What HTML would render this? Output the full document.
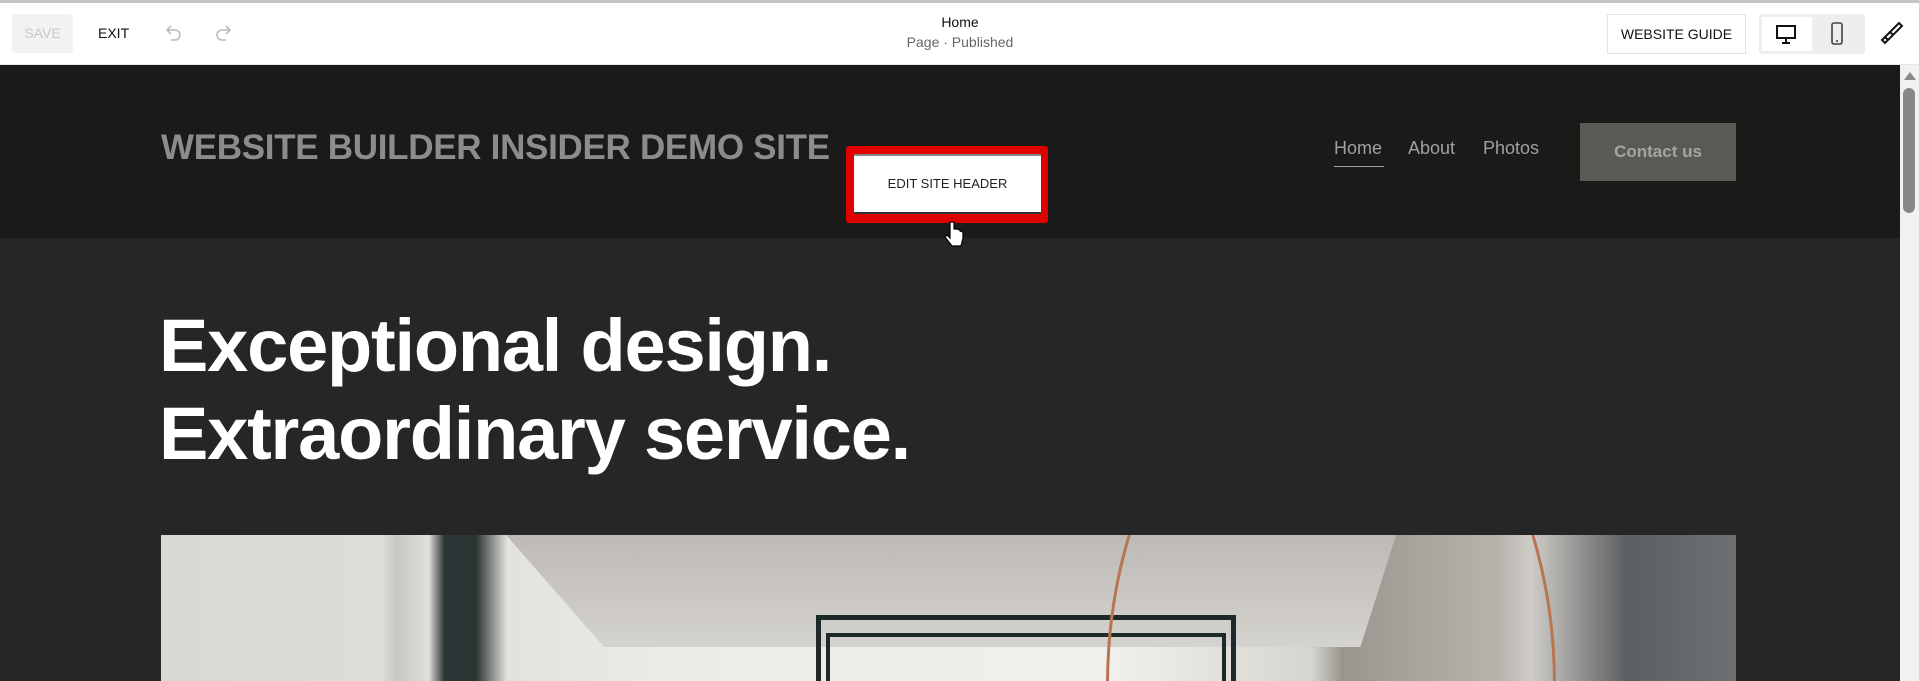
<!DOCTYPE html>
<html><head><style>
*{margin:0;padding:0;box-sizing:border-box}
html,body{width:1919px;height:681px;overflow:hidden}
body{background:#262626;font-family:"Liberation Sans",sans-serif;position:relative}
.a{position:absolute}
</style></head><body>
<div class="a" style="left:0;top:0;width:1919px;height:3px;background:#c4c4c4"></div>
<div class="a" style="left:0;top:3px;width:1919px;height:62px;background:#fff;border-bottom:1px solid #e6e6e6"></div>
<div class="a" style="left:12px;top:14px;width:61px;height:39px;background:#f2f2f2;border-radius:3px;color:#c8c8c8;font-size:14px;line-height:39px;text-align:center">SAVE</div>
<div class="a" style="left:98px;top:14px;line-height:39px;font-size:14px;color:#111">EXIT</div>
<svg class="a" style="left:163px;top:22px" width="22" height="22" viewBox="0 0 22 22" fill="none" stroke="#bbb" stroke-width="1.6"><path d="M8 4L4 8l4 4"/><path d="M4 8h8a5 5 0 010 10H8"/></svg>
<svg class="a" style="left:212px;top:22px" width="22" height="22" viewBox="0 0 22 22" fill="none" stroke="#bbb" stroke-width="1.6"><path d="M14 4l4 4-4 4"/><path d="M18 8h-8a5 5 0 000 10h4"/></svg>
<div class="a" style="left:860px;top:14px;width:200px;text-align:center;font-size:14px;color:#111">Home</div>
<div class="a" style="left:860px;top:34px;width:200px;text-align:center;font-size:14px;color:#666">Page · Published</div>
<div class="a" style="left:1607px;top:14px;width:139px;height:40px;border:1px solid #e2e2e2;font-size:14px;line-height:38px;text-align:center;color:#111">WEBSITE GUIDE</div>
<div class="a" style="left:1759px;top:14px;width:106px;height:40px;background:#eee;border-radius:3px"></div>
<div class="a" style="left:1762px;top:17px;width:50px;height:34px;background:#fff"></div>
<svg class="a" style="left:1775px;top:23px" width="22" height="22" viewBox="0 0 22 22" fill="none" stroke="#111" stroke-width="2"><rect x="2" y="3" width="18" height="12"/><path d="M11 15v4M7 20h8"/></svg>
<svg class="a" style="left:1826px;top:21px" width="22" height="26" viewBox="0 0 22 26" fill="none" stroke="#444" stroke-width="1.6"><rect x="6" y="2" width="10" height="21" rx="2"/><path d="M10 20h2"/></svg>
<svg class="a" style="left:1877px;top:20px" width="28" height="28" viewBox="0 0 28 28" fill="none" stroke="#111" stroke-width="2"><path d="M22 3l3 3-9 9-3-3z"/><path d="M13 12l-8 8 3 3 8-8"/><path d="M8 17l3 3"/></svg>
<div class="a" style="left:0;top:65px;width:1900px;height:173px;background:#1a1a18"></div>
<div class="a" style="left:1900px;top:65px;width:19px;height:616px;background:#f1f1f1"></div>
<div class="a" style="left:1904px;top:72px;width:0;height:0;border-left:6px solid transparent;border-right:6px solid transparent;border-bottom:8px solid #888"></div>
<div class="a" style="left:1903px;top:88px;width:12px;height:125px;background:#888;border-radius:6px"></div>
<div class="a" style="left:161px;top:128px;font-size:35px;font-weight:bold;color:#8c8c8c;letter-spacing:-0.3px;white-space:nowrap">WEBSITE BUILDER INSIDER DEMO SITE</div>
<div class="a" style="left:846px;top:146px;width:202px;height:77px;background:#e00000;border-radius:3px"></div>
<div class="a" style="left:854px;top:154px;width:187px;height:60px;background:#fff;border-top:2px solid #888;border-bottom:2px solid #333;text-align:center;line-height:56px;font-size:13px;color:#222">EDIT SITE HEADER</div>
<div class="a" style="left:1334px;top:138px;font-size:18px;color:#a0a0a0">Home</div>
<div class="a" style="left:1334px;top:166px;width:50px;height:1px;background:#a0a0a0"></div>
<div class="a" style="left:1408px;top:138px;font-size:18px;color:#a0a0a0">About</div>
<div class="a" style="left:1483px;top:138px;font-size:18px;color:#a0a0a0">Photos</div>
<div class="a" style="left:1580px;top:123px;width:156px;height:58px;background:#5a5955;color:#a5a5a0;font-size:17px;font-weight:bold;text-align:center;line-height:58px">Contact us</div>
<div class="a" style="left:159px;top:302px;font-size:74px;font-weight:bold;color:#fff;line-height:88px;letter-spacing:-1.2px;white-space:nowrap">Exceptional design.<br>Extraordinary service.</div>
<svg class="a" style="left:943px;top:220px" width="24" height="32" viewBox="0 0 24 32"><path d="M7 2v16l-3-3-2 2 7 9h9l2-8v-6l-3-1v-1l-3-1-3 0V2z" fill="#fff" stroke="#000" stroke-width="1.2"/></svg>
<div class="a" style="left:161px;top:535px;width:1575px;height:146px;overflow:hidden;background:linear-gradient(90deg,#d8d8d4 0%,#dcdcd8 14%,#c8c8c4 15%,#e0dfdc 17%,#2a3535 18%,#2b3534 20%,#e4e2df 22%,#ecebe7 33%,#f1f0ec 60%,#d7d5d0 73%,#9a968f 75%,#b7b3ad 85%,#cfccc7 87%,#5c5f62 93%,#6d7073 100%)">
<div class="a" style="left:345px;top:0;width:890px;height:112px;background:linear-gradient(180deg,#bdbab5,#d5d3cf);clip-path:polygon(0 0,100% 0,96% 100%,11% 100%)"></div>
<div class="a" style="left:655px;top:80px;width:420px;height:66px;border:5px solid #1e2a29;border-bottom:none"></div>
<div class="a" style="left:665px;top:98px;width:400px;height:48px;border:4px solid #1e2a29;border-bottom:none"></div>
<div class="a" style="left:945px;top:-200px;width:450px;height:700px;border:3px solid #b87550;border-radius:50%"></div>
</div>
</body></html>
